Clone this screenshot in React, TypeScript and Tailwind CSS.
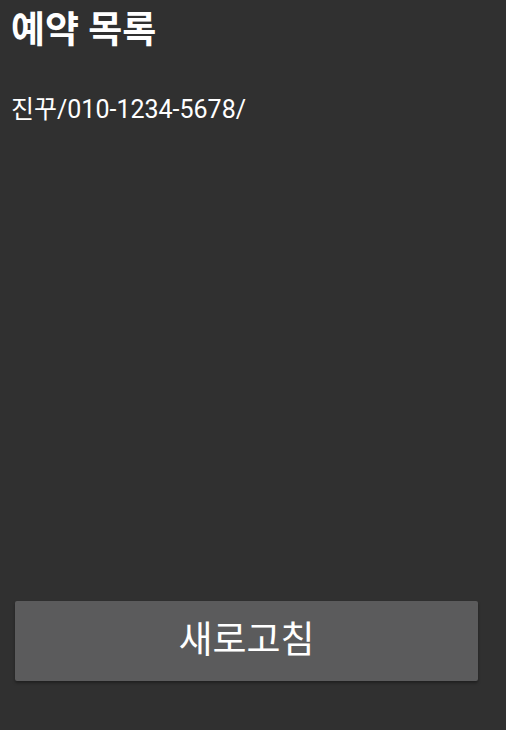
import React from "react";

export default function App() {
  return (
    <div
      className="w-[506px] h-[730px] bg-[#303030] flex flex-col text-white"
      style={{ fontFamily: 'Roboto, "Noto Sans CJK KR", sans-serif' }}
    >
      <div className="px-[11px] pt-[7px]">
        <h1 className="text-[37px] font-bold leading-[48px]">예약 목록</h1>
        <p className="mt-[39px] text-[25px] leading-[32px]">진꾸/010-1234-5678/</p>
      </div>
      <div className="flex-1" />
      <div className="px-[15px] pb-[49px] pr-[28px]">
        <button className="w-full h-[80px] bg-[#5b5b5c] rounded-[2px] shadow-[0_2px_3px_rgba(0,0,0,0.35)] text-[37px] text-white">
          새로고침
        </button>
      </div>
    </div>
  );
}
